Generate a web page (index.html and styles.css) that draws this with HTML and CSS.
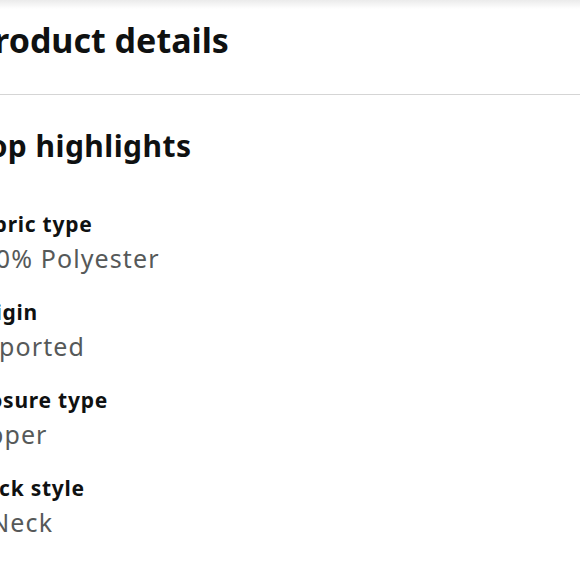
FILE: index.html
```html
<!DOCTYPE html>
<html>
<head>
<meta charset="utf-8">
<link rel="stylesheet" href="styles.css">
</head>
<body>
<div class="page">
  <div class="topshade"></div>
  <header class="header">
    <h1 class="title">Product details</h1>
  </header>
  <section class="highlights">
    <h2 class="subtitle">Top highlights</h2>
    <div class="list">
      <div class="item">
        <div class="label">Fabric type</div>
        <div class="value">100% Polyester</div>
      </div>
      <div class="item">
        <div class="label">Origin</div>
        <div class="value">Imported</div>
      </div>
      <div class="item">
        <div class="label">Closure type</div>
        <div class="value">Zipper</div>
      </div>
      <div class="item">
        <div class="label">Neck style</div>
        <div class="value">V-Neck</div>
      </div>
    </div>
  </section>
</div>
</body>
</html>
```

FILE: styles.css
```css
html, body {
  margin: 0;
  padding: 0;
  background: #ffffff;
  overflow: hidden;
}
body {
  width: 580px;
  height: 580px;
  font-family: "Noto Sans", "Open Sans", sans-serif;
  color: #0f1111;
}
.page {
  position: relative;
  width: 580px;
  height: 580px;
  overflow: hidden;
}
.topshade {
  position: absolute;
  left: 0;
  right: 0;
  top: 0;
  height: 9px;
  background: linear-gradient(to bottom, #ebebeb, rgba(255,255,255,0));
}
.header {
  padding: 20px 0 34px 0;
  border-bottom: 1px solid #d5d5d5;
}
.title {
  margin: 0 0 0 -27px;
  font-size: 34px;
  line-height: 40px;
  font-weight: 700;
  white-space: nowrap;
}
.highlights {
  padding-top: 33px;
}
.subtitle {
  margin: 0 0 0 -27px;
  font-size: 30px;
  line-height: 36px;
  font-weight: 700;
  letter-spacing: 0.45px;
  white-space: nowrap;
}
.list {
  display: flex;
  flex-direction: column;
  gap: 25px;
  margin-top: 47px;
}
.item {
  display: flex;
  flex-direction: column;
  gap: 5px;
}
.label {
  margin-left: -32px;
  font-size: 21px;
  line-height: 26px;
  font-weight: 700;
  letter-spacing: 0.75px;
  white-space: nowrap;
}
.value {
  margin-left: -35px;
  font-size: 25px;
  line-height: 32px;
  color: #565959;
  letter-spacing: 1.1px;
  white-space: nowrap;
}
```
